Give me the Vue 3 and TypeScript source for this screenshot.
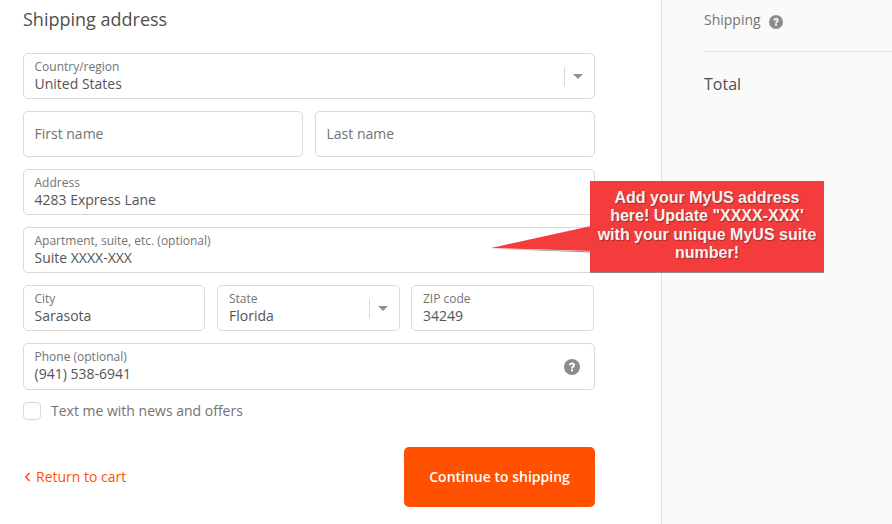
<script setup lang="ts">
const calloutText = `Add your MyUS address here! Update "XXXX-XXX' with your unique MyUS suite number!`
</script>

<template>
  <div class="page">
    <main class="main">
      <h2 class="title">Shipping address</h2>
      <div class="form">
        <div class="field select">
          <div class="body"><span class="label">Country/region</span><span class="value">United States</span></div>
          <span class="sep"></span><span class="caret"></span>
        </div>
        <div class="row two">
          <div class="field empty"><span class="placeholder">First name</span></div>
          <div class="field empty"><span class="placeholder">Last name</span></div>
        </div>
        <div class="field">
          <div class="body"><span class="label">Address</span><span class="value">4283 Express Lane</span></div>
        </div>
        <div class="field">
          <div class="body"><span class="label">Apartment, suite, etc. (optional)</span><span class="value">Suite XXXX-XXX</span></div>
        </div>
        <div class="row three">
          <div class="field">
            <div class="body"><span class="label">City</span><span class="value">Sarasota</span></div>
          </div>
          <div class="field select state">
            <div class="body"><span class="label">State</span><span class="value">Florida</span></div>
            <span class="sep"></span><span class="caret"></span>
          </div>
          <div class="field zip">
            <div class="body"><span class="label">ZIP code</span><span class="value">34249</span></div>
          </div>
        </div>
        <div class="field phone">
          <div class="body"><span class="label">Phone (optional)</span><span class="value">(941) 538-6941</span></div>
          <svg class="help" width="16" height="16" viewBox="0 0 16 16" aria-hidden="true">
            <circle cx="8" cy="8" r="8" fill="#8c8c8c" />
            <path d="M5 6.200C5.100 4.500 6.300 3.500 8.100 3.500 9.800 3.500 11 4.500 11 5.900 11 8 9 8 9 9.600H7C7 7.400 8.900 7.300 8.900 6 8.900 5.500 8.500 5.200 8 5.200 7.400 5.200 7 5.600 7 6.200H5z" fill="#fff" />
            <rect x="7" y="10.400" width="2" height="2" fill="#fff" />
          </svg>
        </div>
      </div>
      <label class="check"><span class="box"></span><span>Text me with news and offers</span></label>
      <div class="actions">
        <a class="back">
          <svg width="7" height="10" viewBox="0 0 7 10" aria-hidden="true">
            <path d="M5.500 1 1.800 5l3.700 4" fill="none" stroke="#ff5100" stroke-width="1.500" />
          </svg>
          Return to cart
        </a>
        <button class="continue" type="button">Continue to shipping</button>
      </div>
      <div class="callout">
        <svg class="pointer" width="100" height="27" viewBox="0 0 100 27" aria-hidden="true">
          <polygon points="100,25.500 0,22.500 100,26.500" fill="#8a8a8a" />
          <polygon points="100,0 0,22 100,25" fill="#f43c3d" />
        </svg>
        <p>{{ calloutText }}</p>
      </div>
    </main>
    <aside class="side">
      <div class="ship">
        <span>Shipping</span>
        <svg width="14" height="14" viewBox="0 0 16 16" aria-hidden="true">
          <circle cx="8" cy="8" r="8" fill="#8c8c8c" />
          <path d="M5 6.200C5.100 4.500 6.300 3.500 8.100 3.500 9.800 3.500 11 4.500 11 5.900 11 8 9 8 9 9.600H7C7 7.400 8.900 7.300 8.900 6 8.900 5.500 8.500 5.200 8 5.200 7.400 5.200 7 5.600 7 6.200H5z" fill="#fff" />
          <rect x="7" y="10.400" width="2" height="2" fill="#fff" />
        </svg>
      </div>
      <div class="total">Total</div>
    </aside>
  </div>
</template>

<style>
html, body { margin: 0; background: #fff; }
</style>

<style scoped>
.page {
  display: flex;
  width: 892px;
  height: 524px;
  overflow: hidden;
  font-family: "Open Sans", sans-serif;
  color: #545454;
}
.main {
  position: relative;
  box-sizing: border-box;
  width: 661px;
  flex: none;
  padding: 6px 66px 0 23px;
}
.title {
  margin: 0;
  font-size: 18px;
  font-weight: 400;
  line-height: 26px;
  color: #4f4f4f;
}
.form {
  display: flex;
  flex-direction: column;
  gap: 12px;
  margin-top: 21px;
}
.row { display: grid; gap: 12px; }
.two { grid-template-columns: 280px 280px; }
.three { grid-template-columns: 182px 183px 183px; column-gap: 11.500px; }
.field {
  box-sizing: border-box;
  height: 46px;
  border: 1px solid #d9d9d9;
  border-radius: 5px;
  background: #fff;
  display: flex;
  align-items: center;
  padding: 0 11px 0 10.500px;
}
.state { padding-left: 11.500px; }
.zip { padding-left: 11px; }
.body { flex: 1; min-width: 0; display: flex; flex-direction: column; }
.label { font-size: 12px; line-height: 16px; color: #737373; }
.value { font-size: 14px; line-height: 18px; color: #545454; }
.placeholder { font-size: 14px; line-height: 18px; color: #737373; }
.sep { width: 1px; height: 19px; background: #d9d9d9; margin-right: 8px; }
.caret {
  width: 0;
  height: 0;
  border-left: 5.500px solid transparent;
  border-right: 5.500px solid transparent;
  border-top: 5px solid #919191;
  margin-right: 0;
}
.phone { height: 47px; padding-bottom: 2px; }
.help { flex: none; margin-right: 3px; margin-top: 2px; }
.check {
  display: flex;
  align-items: center;
  gap: 10px;
  margin-top: 12px;
  height: 18px;
  font-size: 14px;
  color: #737373;
}
.check span:last-child { margin-top: -2px; }
.box {
  box-sizing: border-box;
  width: 18px;
  height: 18px;
  border: 1px solid #d9d9d9;
  border-radius: 4px;
}
.actions {
  display: flex;
  justify-content: space-between;
  align-items: center;
  margin-top: 27px;
}
.back {
  display: flex;
  align-items: center;
  gap: 5px;
  font-size: 14px;
  line-height: 18px;
  color: #ff5100;
  margin-left: 1px;
}
.continue {
  width: 191px;
  height: 60px;
  border: 0;
  border-radius: 5px;
  background: #ff5100;
  color: #fff;
  font-family: inherit;
  font-size: 14px;
  font-weight: 600;
  padding: 0 0 2px;
}
.callout {
  position: absolute;
  left: 590px;
  top: 181px;
  box-sizing: border-box;
  width: 234px;
  height: 91px;
  background: #f43c3d;
  box-shadow: 0 1px 0 #8a8a8a;
  display: flex;
  align-items: center;
  justify-content: center;
  padding-bottom: 2px;
  z-index: 1;
}
.callout p {
  margin: 0;
  width: 222px;
  text-align: center;
  font-family: "Liberation Sans", Arial, sans-serif;
  font-size: 16px;
  line-height: 18.500px;
  font-weight: 700;
  color: #f4f0f0;
  text-shadow: 1px 1px 1px rgba(90, 40, 40, .6);
}
.pointer { position: absolute; left: -99px; top: 45px; }
.side {
  flex: 1;
  box-sizing: border-box;
  border-left: 1px solid #e1e1e1;
  background: #fafafa;
  padding-left: 42px;
}
.ship {
  display: flex;
  align-items: center;
  gap: 8px;
  box-sizing: content-box;
  height: 38px;
  padding-bottom: 13px;
  border-bottom: 1px solid #e1e1e1;
  font-size: 14px;
  color: #737373;
}
.ship svg { margin-top: 6px; }
.total {
  margin-top: 20px;
  font-size: 16px;
  line-height: 24px;
  color: #4f4f4f;
}
</style>
